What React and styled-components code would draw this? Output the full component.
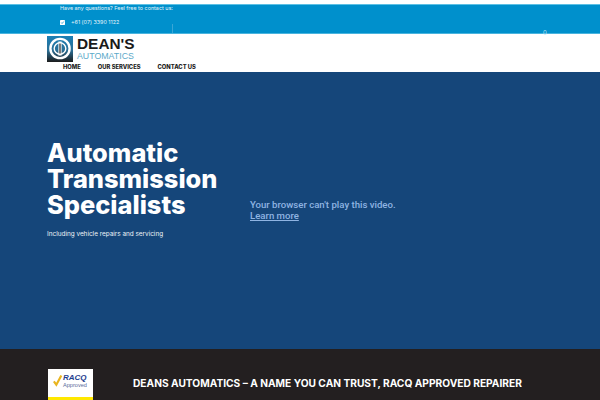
import React from "react";
import styled, { createGlobalStyle } from "styled-components";

const GlobalStyle = createGlobalStyle`
  html, body { margin: 0; padding: 0; background: #fff; }
  body { width: 600px; height: 400px; overflow: hidden; font-family: "Inter", "Liberation Sans", sans-serif; }
`;

function App() {
  return (
    <>
      <GlobalStyle />
      <Page>
        <TopBar>
          <TopInner>
            <TopText>Have any questions? Feel free to contact us:</TopText>
            <PhoneRow>
              <CheckBox viewBox="0 0 6 6">
                <rect width="6" height="6" rx="1" fill="#fff" />
                <path d="M1.4 3l1.1 1.2L4.6 1.8" stroke="#0090cc" strokeWidth="0.9" fill="none" />
              </CheckBox>
              <TopText>+61 (07) 3390 1122</TopText>
            </PhoneRow>
          </TopInner>
          <Divider />
        </TopBar>
        <Header>
          <Logo>
            <LogoMark viewBox="0 0 26 26">
              <defs>
                <linearGradient id="logoBg" x1="0" y1="0" x2="0" y2="1">
                  <stop offset="0" stopColor="#1a7fb5" />
                  <stop offset="0.55" stopColor="#2a6f96" />
                  <stop offset="1" stopColor="#1c1c1c" />
                </linearGradient>
              </defs>
              <rect width="26" height="26" fill="url(#logoBg)" />
              <circle cx="13" cy="12.5" r="9.6" fill="none" stroke="#fff" strokeWidth="2.4" />
              <circle cx="13" cy="12.5" r="5.8" fill="none" stroke="#fff" strokeWidth="1.4" />
              <rect x="11.4" y="5.5" width="3.2" height="14" fill="#fff" />
              <rect x="12.4" y="7.5" width="1.2" height="10" fill="#222" />
            </LogoMark>
            <LogoWords>
              <LogoName>DEAN'S</LogoName>
              <LogoSub>AUTOMATICS</LogoSub>
            </LogoWords>
          </Logo>
          <Nav>
            <NavLink>HOME</NavLink>
            <NavLink>OUR SERVICES</NavLink>
            <NavLink>CONTACT US</NavLink>
          </Nav>
          <CartBadge>0</CartBadge>
        </Header>
        <Hero>
          <HeroCopy>
            <Title>Automatic Transmission Specialists</Title>
            <Lead>Including vehicle repairs and servicing</Lead>
          </HeroCopy>
          <VideoNote>
            <VideoLine>Your browser can't play this video.</VideoLine>
            <VideoLink href="#">Learn more</VideoLink>
          </VideoNote>
        </Hero>
        <Footer>
          <Badge>
            <BadgeTop>
              <BadgeCheck viewBox="0 0 12 14">
                <path d="M1 8l3 4L10 1" stroke="#e9b520" strokeWidth="2.6" fill="none" />
              </BadgeCheck>
              <BadgeWords>
                <BadgeName>RACQ</BadgeName>
                <BadgeSub>Approved</BadgeSub>
              </BadgeWords>
            </BadgeTop>
            <BadgeStripe />
          </Badge>
          <FooterTitle>DEANS AUTOMATICS – A NAME YOU CAN TRUST, RACQ APPROVED REPAIRER</FooterTitle>
        </Footer>
      </Page>
    </>
  );
}

const Page = styled.div`
  width: 600px;
  height: 400px;
  display: flex;
  flex-direction: column;
  overflow: hidden;
`;

const TopBar = styled.div`
  margin-top: 4px;
  height: 28px;
  background: #0090cc;
  border-top: 1px solid #5cc0e4;
  border-bottom: 1px solid #49b4de;
  display: flex;
  flex-shrink: 0;
  padding-left: 60px;
`;

const TopInner = styled.div`
  display: flex;
  flex-direction: column;
  gap: 8px;
  width: 112px;
`;

const TopText = styled.span`
  font-size: 5.4px;
  line-height: 6px;
  color: #e4f4fb;
  white-space: nowrap;
`;

const PhoneRow = styled.div`
  display: flex;
  align-items: center;
  gap: 6px;
`;

const CheckBox = styled.svg`
  width: 5px;
  height: 5px;
`;

const Divider = styled.div`
  width: 1px;
  height: 9px;
  margin-top: 19px;
  background: #3aa6d6;
`;

const Header = styled.div`
  position: relative;
  height: 38px;
  flex-shrink: 0;
  background: #fff;
  padding-left: 47px;
  box-sizing: border-box;
`;

const Logo = styled.div`
  display: flex;
  gap: 4px;
  height: 26px;
  padding-top: 2px;
`;

const LogoMark = styled.svg`
  width: 26px;
  height: 26px;
`;

const LogoWords = styled.div`
  display: flex;
  flex-direction: column;
`;

const LogoName = styled.div`
  font-family: "Liberation Sans", sans-serif;
  font-size: 15.4px;
  line-height: 15px;
  font-weight: 700;
  color: #1a1a1a;
`;

const LogoSub = styled.div`
  font-family: "Liberation Sans", sans-serif;
  font-size: 8.8px;
  line-height: 10px;
  color: #5ba9c9;
`;

const Nav = styled.nav`
  display: flex;
  gap: 17px;
  padding-left: 16px;
  margin-top: 1px;
`;

const NavLink = styled.a`
  font-size: 5.8px;
  line-height: 8px;
  font-weight: 800;
  color: #222;
`;

const CartBadge = styled.span`
  position: absolute;
  top: -5px;
  left: 543px;
  font-size: 6px;
  line-height: 8px;
  color: #bfe6f5;
`;

const Hero = styled.div`
  flex: 1;
  background: #15467a;
  display: flex;
  padding-left: 47px;
`;

const HeroCopy = styled.div`
  width: 203px;
  padding-top: 68px;
`;

const Title = styled.h1`
  margin: 0;
  width: 190px;
  font-size: 25.4px;
  line-height: 26px;
  font-weight: 800;
  color: #fff;
`;

const Lead = styled.p`
  margin: 11px 0 0;
  font-size: 6.4px;
  line-height: 10px;
  color: #eef3f8;
`;

const VideoNote = styled.div`
  margin-top: 127px;
  font-family: "Roboto", sans-serif;
  font-size: 9.6px;
  line-height: 11px;
  font-weight: 500;
  color: #8fb4e2;
  display: flex;
  flex-direction: column;
  align-items: flex-start;
`;

const VideoLine = styled.span`
  height: 11px;
  white-space: nowrap;
`;

const VideoLink = styled.a`
  color: #8fb4e2;
  text-decoration: underline;
`;

const Footer = styled.div`
  height: 51px;
  flex-shrink: 0;
  background: #231f20;
  display: flex;
  padding: 20px 0 0 48px;
  box-sizing: border-box;
  gap: 40px;
`;

const Badge = styled.div`
  width: 45px;
  height: 45px;
  flex-shrink: 0;
  background: #fff;
  display: flex;
  flex-direction: column;
`;

const BadgeTop = styled.div`
  height: 28px;
  display: flex;
  align-items: flex-start;
  padding: 5px 0 0 5px;
  box-sizing: border-box;
`;

const BadgeCheck = styled.svg`
  width: 10px;
  height: 13px;
`;

const BadgeWords = styled.div`
  display: flex;
  flex-direction: column;
`;

const BadgeName = styled.span`
  font-family: "Liberation Sans", sans-serif;
  font-size: 8px;
  line-height: 8px;
  font-weight: 700;
  font-style: italic;
  color: #1f3f8f;
`;

const BadgeSub = styled.span`
  font-family: "Liberation Sans", sans-serif;
  font-size: 5.6px;
  line-height: 6px;
  color: #5a6a9a;
`;

const BadgeStripe = styled.div`
  flex: 1;
  background: #ffe800;
`;

const FooterTitle = styled.div`
  font-size: 10.2px;
  line-height: 12px;
  font-weight: 700;
  color: #fff;
  padding-top: 8px;
  white-space: nowrap;
`;

export default App;
